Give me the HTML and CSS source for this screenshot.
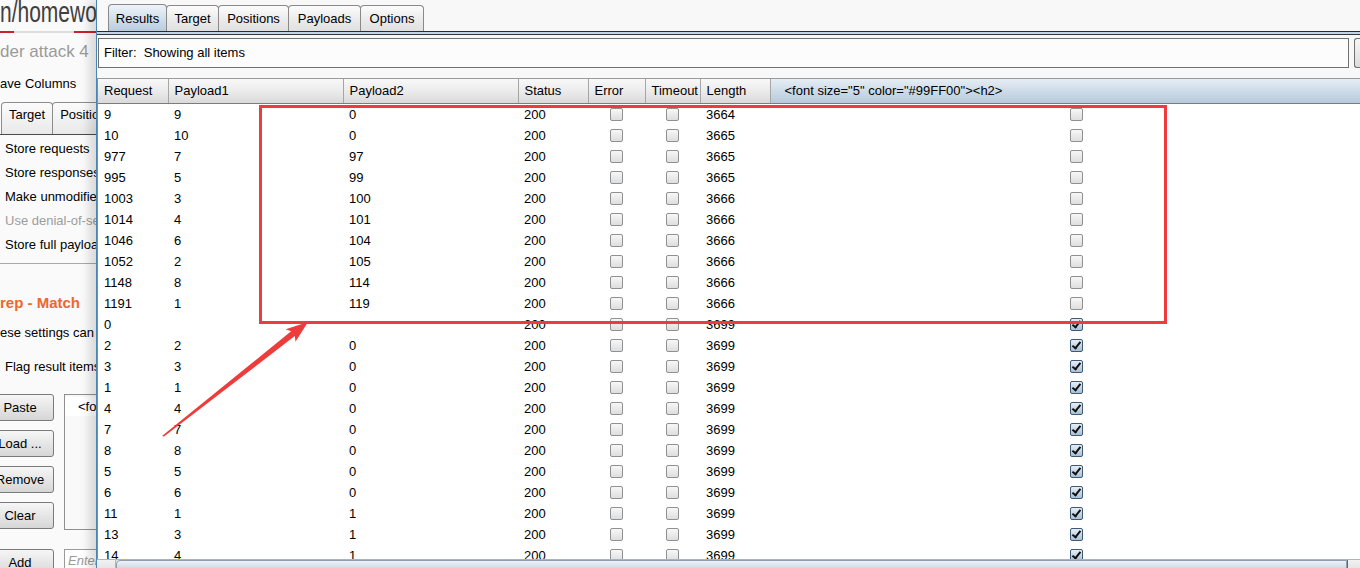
FILE: index.html
```html
<!DOCTYPE html>
<html>
<head>
<meta charset="utf-8">
<title>Intruder attack 4</title>
<link rel="stylesheet" href="styles.css">
</head>
<body>
<div class="app">

  <!-- window behind: the attack options -->
  <div class="back">
    <div class="page-title"><span>n/homework</span></div>
    <div class="page-rule"><span class="red"></span><span class="grey"></span><span class="red"></span></div>
    <div class="attack-name">der attack 4</div>
    <div class="menu"><span>ave</span><span>Columns</span></div>
    <div class="small-tabs">
      <span class="small-tab">Target</span>
      <span class="small-tab">Positions</span>
    </div>
    <div class="opts">
      <div class="opt">Store requests</div>
      <div class="opt">Store responses</div>
      <div class="opt">Make unmodified baseline request</div>
      <div class="opt off">Use denial-of-service mode</div>
      <div class="opt">Store full payloads</div>
    </div>
    <div class="sep"></div>
    <div class="section-title">rep - Match</div>
    <div class="section-text">ese settings can be used</div>
    <div class="flag">Flag result items with responses</div>
    <div class="list-area">
      <div class="list-buttons">
        <button class="btn">Paste</button>
        <button class="btn">Load ...</button>
        <button class="btn">Remove</button>
        <button class="btn">Clear</button>
      </div>
      <div class="list-box">
        <div class="list-item">&lt;font size="5"</div>
      </div>
    </div>
    <div class="add-row">
      <button class="btn">Add</button>
      <div class="add-input">Enter a new item</div>
    </div>
  </div>

  <!-- results window in front -->
  <div class="front">
    <div class="tabs">
      <span class="tab sel w-results">Results</span>
      <span class="tab w-target">Target</span>
      <span class="tab w-positions">Positions</span>
      <span class="tab w-payloads">Payloads</span>
      <span class="tab w-options">Options</span>
    </div>
    <div class="tab-rule"></div>
    <div class="filter-row">
      <div class="filter">Filter:&nbsp; Showing all items</div>
      <div class="filter-btn"></div>
    </div>
    <div class="grid-wrap">
      <table class="grid">
        <colgroup>
          <col style="width:70px"><col style="width:175px"><col style="width:175px"><col style="width:70px">
          <col style="width:57px"><col style="width:55px"><col style="width:70px"><col style="width:612px">
        </colgroup>
        <thead>
          <tr>
            <th>Request</th><th>Payload1</th><th>Payload2</th><th>Status</th>
            <th>Error</th><th>Timeout</th><th>Length</th>
            <th class="grep">&lt;font size="5" color="#99FF00"&gt;&lt;h2&gt;</th>
          </tr>
        </thead>
        <tbody>
          <tr><td>9</td><td>9</td><td>0</td><td>200</td><td class="c"><span class="cb"></span></td><td class="c"><span class="cb"></span></td><td>3664</td><td class="c"><span class="cb"></span></td></tr>
          <tr><td>10</td><td>10</td><td>0</td><td>200</td><td class="c"><span class="cb"></span></td><td class="c"><span class="cb"></span></td><td>3665</td><td class="c"><span class="cb"></span></td></tr>
          <tr><td>977</td><td>7</td><td>97</td><td>200</td><td class="c"><span class="cb"></span></td><td class="c"><span class="cb"></span></td><td>3665</td><td class="c"><span class="cb"></span></td></tr>
          <tr><td>995</td><td>5</td><td>99</td><td>200</td><td class="c"><span class="cb"></span></td><td class="c"><span class="cb"></span></td><td>3665</td><td class="c"><span class="cb"></span></td></tr>
          <tr><td>1003</td><td>3</td><td>100</td><td>200</td><td class="c"><span class="cb"></span></td><td class="c"><span class="cb"></span></td><td>3666</td><td class="c"><span class="cb"></span></td></tr>
          <tr><td>1014</td><td>4</td><td>101</td><td>200</td><td class="c"><span class="cb"></span></td><td class="c"><span class="cb"></span></td><td>3666</td><td class="c"><span class="cb"></span></td></tr>
          <tr><td>1046</td><td>6</td><td>104</td><td>200</td><td class="c"><span class="cb"></span></td><td class="c"><span class="cb"></span></td><td>3666</td><td class="c"><span class="cb"></span></td></tr>
          <tr><td>1052</td><td>2</td><td>105</td><td>200</td><td class="c"><span class="cb"></span></td><td class="c"><span class="cb"></span></td><td>3666</td><td class="c"><span class="cb"></span></td></tr>
          <tr><td>1148</td><td>8</td><td>114</td><td>200</td><td class="c"><span class="cb"></span></td><td class="c"><span class="cb"></span></td><td>3666</td><td class="c"><span class="cb"></span></td></tr>
          <tr><td>1191</td><td>1</td><td>119</td><td>200</td><td class="c"><span class="cb"></span></td><td class="c"><span class="cb"></span></td><td>3666</td><td class="c"><span class="cb"></span></td></tr>
          <tr><td>0</td><td></td><td></td><td>200</td><td class="c"><span class="cb"></span></td><td class="c"><span class="cb"></span></td><td>3699</td><td class="c"><span class="cb on"></span></td></tr>
          <tr><td>2</td><td>2</td><td>0</td><td>200</td><td class="c"><span class="cb"></span></td><td class="c"><span class="cb"></span></td><td>3699</td><td class="c"><span class="cb on"></span></td></tr>
          <tr><td>3</td><td>3</td><td>0</td><td>200</td><td class="c"><span class="cb"></span></td><td class="c"><span class="cb"></span></td><td>3699</td><td class="c"><span class="cb on"></span></td></tr>
          <tr><td>1</td><td>1</td><td>0</td><td>200</td><td class="c"><span class="cb"></span></td><td class="c"><span class="cb"></span></td><td>3699</td><td class="c"><span class="cb on"></span></td></tr>
          <tr><td>4</td><td>4</td><td>0</td><td>200</td><td class="c"><span class="cb"></span></td><td class="c"><span class="cb"></span></td><td>3699</td><td class="c"><span class="cb on"></span></td></tr>
          <tr><td>7</td><td>7</td><td>0</td><td>200</td><td class="c"><span class="cb"></span></td><td class="c"><span class="cb"></span></td><td>3699</td><td class="c"><span class="cb on"></span></td></tr>
          <tr><td>8</td><td>8</td><td>0</td><td>200</td><td class="c"><span class="cb"></span></td><td class="c"><span class="cb"></span></td><td>3699</td><td class="c"><span class="cb on"></span></td></tr>
          <tr><td>5</td><td>5</td><td>0</td><td>200</td><td class="c"><span class="cb"></span></td><td class="c"><span class="cb"></span></td><td>3699</td><td class="c"><span class="cb on"></span></td></tr>
          <tr><td>6</td><td>6</td><td>0</td><td>200</td><td class="c"><span class="cb"></span></td><td class="c"><span class="cb"></span></td><td>3699</td><td class="c"><span class="cb on"></span></td></tr>
          <tr><td>11</td><td>1</td><td>1</td><td>200</td><td class="c"><span class="cb"></span></td><td class="c"><span class="cb"></span></td><td>3699</td><td class="c"><span class="cb on"></span></td></tr>
          <tr><td>13</td><td>3</td><td>1</td><td>200</td><td class="c"><span class="cb"></span></td><td class="c"><span class="cb"></span></td><td>3699</td><td class="c"><span class="cb on"></span></td></tr>
          <tr><td>14</td><td>4</td><td>1</td><td>200</td><td class="c"><span class="cb"></span></td><td class="c"><span class="cb"></span></td><td>3699</td><td class="c"><span class="cb on"></span></td></tr>
        </tbody>
      </table>
    </div>
    <div class="hscroll">
      <span class="arrow-btn left"></span>
      <span class="thumb"></span>
      <span class="arrow-btn right"></span>
    </div>
  </div>

  <!-- red annotation drawn over the screenshot -->
  <svg class="marks" width="1360" height="568" viewBox="0 0 1360 568">
    <rect x="260.5" y="106.5" width="905" height="216" fill="none" stroke="#ee3b3b" stroke-width="3"/>
    <polygon fill="#ee3b3b" points="162,436 291.1,331.3 285.7,329.2 308,322 295.5,341.8 294.8,336.1 164,436.5"/>
  </svg>
</div>
</body>
</html>
```

FILE: styles.css
```css
html, body {
  margin: 0;
  height: 100%;
  overflow: hidden;
}

body {
  font: 13px "Liberation Sans", Arial, sans-serif;
  color: #000;
  background: #fafafa;
}

.app {
  display: flex;
  height: 577px;
  position: relative;
}

/* window behind */
.back {
  width: 96px;
  flex: none;
  overflow: hidden;
  background: #fafafa;
  white-space: nowrap;
}

.page-title {
  height: 31px;
  overflow: hidden;
  font-size: 30px;
  line-height: 24px;
  color: #404040;
}
.page-title span {
  display: inline-block;
  transform: scaleX(0.7);
  transform-origin: left center;
}

.page-rule {
  display: flex;
  height: 2px;
}
.page-rule .red {
  background: #c8202e;
  width: 14px;
}
.page-rule .red:last-child {
  flex: 1;
}
.page-rule .grey {
  width: 60px;
  background: #dcdcdc;
}

.attack-name {
  height: 38px;
  line-height: 38px;
  font-size: 17px;
  color: #9a9a9a;
}

.menu {
  display: flex;
  gap: 4px;
  height: 26px;
  line-height: 26px;
}

.small-tabs {
  display: flex;
  height: 37px;
  align-items: flex-end;
  padding-left: 1px;
  border-bottom: 1px solid #4a4a4a;
}
.small-tab {
  height: 32px;
  padding: 3px 7px 0;
  box-sizing: border-box;
  line-height: 17px;
  border: 1px solid #8c8c8c;
  border-bottom: none;
  border-radius: 4px 4px 0 0;
  background: linear-gradient(#fbfbfb, #e9e9e9);
}
.small-tab + .small-tab {
  margin-left: -1px;
}

.opts {
  padding: 2px 0 0 5px;
}
.opt {
  height: 24px;
  line-height: 24px;
}
.opt.off {
  color: #9c9c9c;
}

.sep {
  margin-top: 6px;
  border-top: 1px solid #a8a8a8;
}

.section-title {
  margin-top: 28px;
  height: 22px;
  line-height: 22px;
  font-size: 15px;
  font-weight: bold;
  color: #f0662e;
}

.section-text {
  margin-top: 8px;
  height: 22px;
  line-height: 22px;
}

.flag {
  margin-top: 12px;
  padding-left: 5px;
  height: 22px;
  line-height: 22px;
}

.list-area {
  display: flex;
  gap: 10px;
  margin-top: 16px;
}
.list-buttons {
  display: flex;
  flex-direction: column;
  gap: 9px;
  margin-left: -14px;
}

.btn {
  flex: none;
  width: 68px;
  height: 27px;
  padding: 0;
  font: inherit;
  color: #000;
  border: 1px solid #7a7a7a;
  border-radius: 3px;
  background: linear-gradient(#f6f6f6, #e6e6e6 50%, #d6d6d6);
}

.list-box {
  flex: 1;
  min-width: 0;
  height: 134px;
  overflow: hidden;
  border: 1px solid #8f8f8f;
  border-right: none;
  background: #f9f9f9;
}
.list-item {
  margin: 2px 0 0 0;
  height: 19px;
  line-height: 19px;
  padding-left: 13px;
  background: #fff;
}

.add-row {
  display: flex;
  gap: 10px;
  margin-top: 19px;
  margin-left: -14px;
}
.add-input {
  flex: 1;
  min-width: 0;
  overflow: hidden;
  height: 22px;
  line-height: 22px;
  padding-left: 3px;
  border: 1px solid #9a9a9a;
  border-right: none;
  background: #fff;
  font-style: italic;
  color: #9a9a9a;
}

/* results window */
.front {
  flex: 1;
  min-width: 0;
  display: flex;
  flex-direction: column;
  position: relative;
  z-index: 1;
  border-left: 1px solid #4a86b4;
  background: #f8f8f8;
  box-shadow: -7px 0 9px rgba(0, 0, 0, 0.13);
  overflow: hidden;
}

.tabs {
  display: flex;
  align-items: flex-end;
  height: 31px;
  padding-left: 11px;
}
.tab {
  height: 26px;
  box-sizing: border-box;
  padding-top: 4px;
  line-height: 17px;
  text-align: center;
  border: 1px solid #8a8a8a;
  border-bottom: none;
  border-radius: 4px 4px 0 0;
  background: linear-gradient(#fcfcfc, #ececec 50%, #e0e0e0);
}
.tab + .tab {
  margin-left: -1px;
}
.tab.sel {
  height: 27px;
  padding-top: 5px;
  background: linear-gradient(#eef3f8, #d3e0ec 50%, #b8cbdf);
}
.w-results { width: 59px; }
.w-target { width: 53px; }
.w-positions { width: 71px; }
.w-payloads { width: 73px; }
.w-options { width: 64px; }

.tab-rule {
  height: 2px;
  border-top: 1px solid #2a2a2a;
  border-bottom: 1px solid #3a3a3a;
  background: #c3d4e6;
}

.filter-row {
  display: flex;
  gap: 5px;
  margin: 3px 0 0 1px;
  height: 30px;
}
.filter {
  width: 1251px;
  box-sizing: border-box;
  border: 1px solid #707070;
  padding-left: 5px;
  line-height: 28px;
  background: #fcfcfc;
}
.filter-btn {
  flex: 1;
  border: 1px solid #707070;
  border-right: none;
  border-radius: 3px 0 0 3px;
  background: linear-gradient(#f6f6f6, #dcdcdc);
}

.grid-wrap {
  margin-top: 10px;
  flex: 1;
  min-height: 0;
  overflow: hidden;
  border-top: 1px solid #9a9a9a;
  border-left: 1px solid #8c8c8c;
  background: #fff;
}

.grid {
  table-layout: fixed;
  border-collapse: collapse;
  width: 1284px;
}
.grid th {
  height: 23px;
  padding: 0 6px 1px;
  font-weight: normal;
  text-align: left;
  white-space: nowrap;
  overflow: hidden;
  border-right: 1px solid #a6a6a6;
  border-bottom: 1px solid #7c7c7c;
  background: linear-gradient(#f8f8f8, #ebebeb 50%, #d9d9d9);
}
.grid th.grep {
  padding-left: 14px;
  border-right: none;
  background: linear-gradient(#e6edf4, #cddbe8 50%, #b6c9db);
}
.grid td {
  height: 21px;
  padding: 0 6px;
  line-height: 21px;
  white-space: nowrap;
}
.grid td.c {
  padding: 0;
  text-align: center;
}

.cb {
  display: inline-block;
  position: relative;
  width: 13px;
  height: 13px;
  box-sizing: border-box;
  vertical-align: -2px;
  border: 1px solid #8e9092;
  border-radius: 2px;
  background: linear-gradient(#f7f7f7, #dedede);
}
.cb.on {
  border-color: #3f5a74;
  background: linear-gradient(#e6eef6, #a9bfd5);
}
.cb.on::after {
  content: "";
  position: absolute;
  left: 3px;
  top: 0;
  width: 3px;
  height: 7px;
  border-right: 2px solid #111;
  border-bottom: 2px solid #111;
  transform: rotate(38deg);
}

.hscroll {
  display: flex;
  height: 17px;
  border-top: 1px solid #a8b4bf;
  background: #e8e8e8;
}
.arrow-btn {
  width: 18px;
  background: linear-gradient(#f2f2f2, #d6d6d6);
  border-right: 1px solid #b4b4b4;
}
.arrow-btn.right {
  width: 12px;
  border-right: none;
  border-left: 1px solid #666;
}
.thumb {
  flex: 1;
  border: 1px solid #8d9eae;
  border-radius: 4px 0 0 4px;
  background: linear-gradient(#eef2f6, #cdd8e2 50%, #b9c7d4);
}

/* annotation overlay */
.marks {
  position: absolute;
  left: 0;
  top: 0;
  z-index: 2;
  pointer-events: none;
}
```
